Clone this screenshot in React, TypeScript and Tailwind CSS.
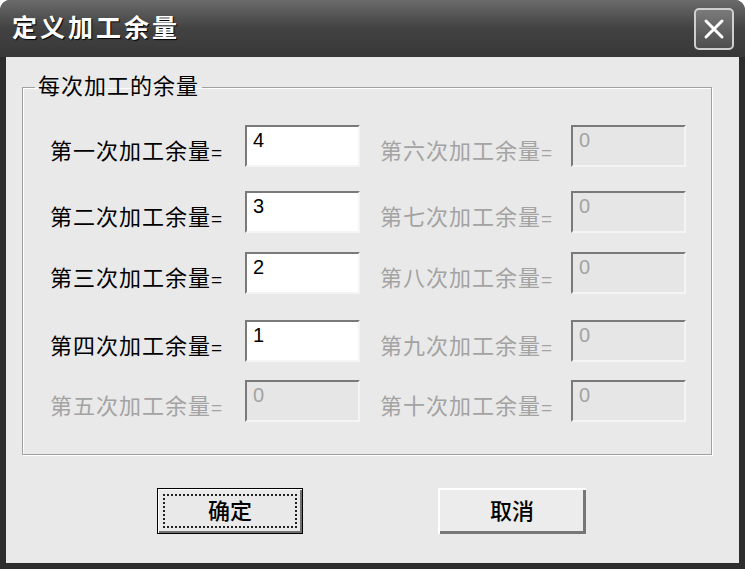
import type { ReactNode } from "react";

const FONT = "font-['Tahoma','Liberation_Sans','Noto_Sans_CJK_SC',sans-serif]";

type Pass = { label: string; value: string; on: boolean };

// left/right columns, one row each; gaps between rows are uneven in the dialog
const ROWS: { gap: string; left: Pass; right: Pass }[] = [
  {
    gap: "mt-[25px]",
    left: { label: "第一次加工余量", value: "4", on: true },
    right: { label: "第六次加工余量", value: "0", on: false },
  },
  {
    gap: "mt-[24px]",
    left: { label: "第二次加工余量", value: "3", on: true },
    right: { label: "第七次加工余量", value: "0", on: false },
  },
  {
    gap: "mt-[19px]",
    left: { label: "第三次加工余量", value: "2", on: true },
    right: { label: "第八次加工余量", value: "0", on: false },
  },
  {
    gap: "mt-[26px]",
    left: { label: "第四次加工余量", value: "1", on: true },
    right: { label: "第九次加工余量", value: "0", on: false },
  },
  {
    gap: "mt-[18px]",
    left: { label: "第五次加工余量", value: "0", on: false },
    right: { label: "第十次加工余量", value: "0", on: false },
  },
];

function Field({ p, labelW }: { p: Pass; labelW: string }) {
  return (
    <div className="flex items-start">
      <span
        className={`${labelW} mt-[15px] whitespace-nowrap text-[22px] leading-[24px] tracking-[1px] ${
          p.on ? "text-black" : "text-[#a3a3a3]"
        }`}
      >
        {p.label}
        <span className="text-[19px]">=</span>
      </span>
      {/* sunken edit box — grey top/left, light bottom/right */}
      <div
        className={`h-[42px] w-[115px] border-2 border-t-[#7a7a7a] border-l-[#7a7a7a] border-r-[#f4f4f4] border-b-[#f4f4f4] pl-[6px] pt-[2px] text-[20px] leading-[22px] ${
          p.on ? "bg-white text-black" : "bg-[#e6e6e6] text-[#a3a3a3]"
        }`}
      >
        {p.value}
      </div>
    </div>
  );
}

function Button({ focus, children }: { focus?: boolean; children: ReactNode }) {
  if (focus) {
    return (
      <div className="h-[46px] w-[146px] border border-black bg-[#e9e9e9] shadow-[inset_1px_1px_0_#fff,inset_-2px_-2px_0_#707070]">
        <div className="m-[5px] flex h-[34px] items-center justify-center border-2 border-dotted border-[#222] text-[22px] font-medium text-black">
          {children}
        </div>
      </div>
    );
  }
  return (
    <div className="flex h-[46px] w-[148px] items-center justify-center bg-[#ececec] text-[22px] font-medium text-black shadow-[inset_2px_2px_0_#fff,inset_-3px_-3px_0_#777]">
      {children}
    </div>
  );
}

export default function App() {
  return (
    <div className={`${FONT} h-[569px] w-[745px] bg-white`}>
      <div className="flex h-full flex-col overflow-hidden rounded-t-[10px] bg-[#2d2d2d]">
        {/* title bar */}
        <div className="flex h-[57px] shrink-0 items-center justify-between bg-gradient-to-b from-[#6b6b6b] via-[#424242] to-[#383838] pl-[12px] pr-[11px]">
          <span className="text-[25px] font-bold tracking-[3px] text-white [text-shadow:1px_1px_1px_#000]">
            定义加工余量
          </span>
          <div className="flex h-[42px] w-[40px] items-center justify-center rounded-[5px] border-2 border-[#cfcfcf] bg-gradient-to-b from-[#7a7a7a] to-[#4e4e4e]">
            <svg width="24" height="24" viewBox="0 0 24 24">
              <path d="M4 4 L20 20 M20 4 L4 20" stroke="#fff" strokeWidth="3" strokeLinecap="round" />
            </svg>
          </div>
        </div>

        {/* client area */}
        <div className="mb-[6px] ml-[6px] mr-[6px] flex-1 bg-[#e9e9e9] pt-[17px]">
          <fieldset className="ml-[16px] mr-[27px] h-[381px] border border-[#a0a0a0] shadow-[1px_1px_0_#fff,inset_1px_1px_0_#fff]">
            <legend className="ml-[12px] px-[3px] text-[22px] leading-[26px] tracking-[1px] text-black">
              每次加工的余量
            </legend>
            <div className="pl-[27px]">
              {ROWS.map((r, i) => (
                <div key={i} className={`${r.gap} flex`}>
                  <Field p={r.left} labelW="w-[195px]" />
                  <div className="ml-[20px]">
                    <Field p={r.right} labelW="w-[191px]" />
                  </div>
                </div>
              ))}
            </div>
          </fieldset>

          <div className="mt-[33px] flex pl-[151px]">
            <Button focus>确定</Button>
            <div className="ml-[135px]">
              <Button>取消</Button>
            </div>
          </div>
        </div>
      </div>
    </div>
  );
}
